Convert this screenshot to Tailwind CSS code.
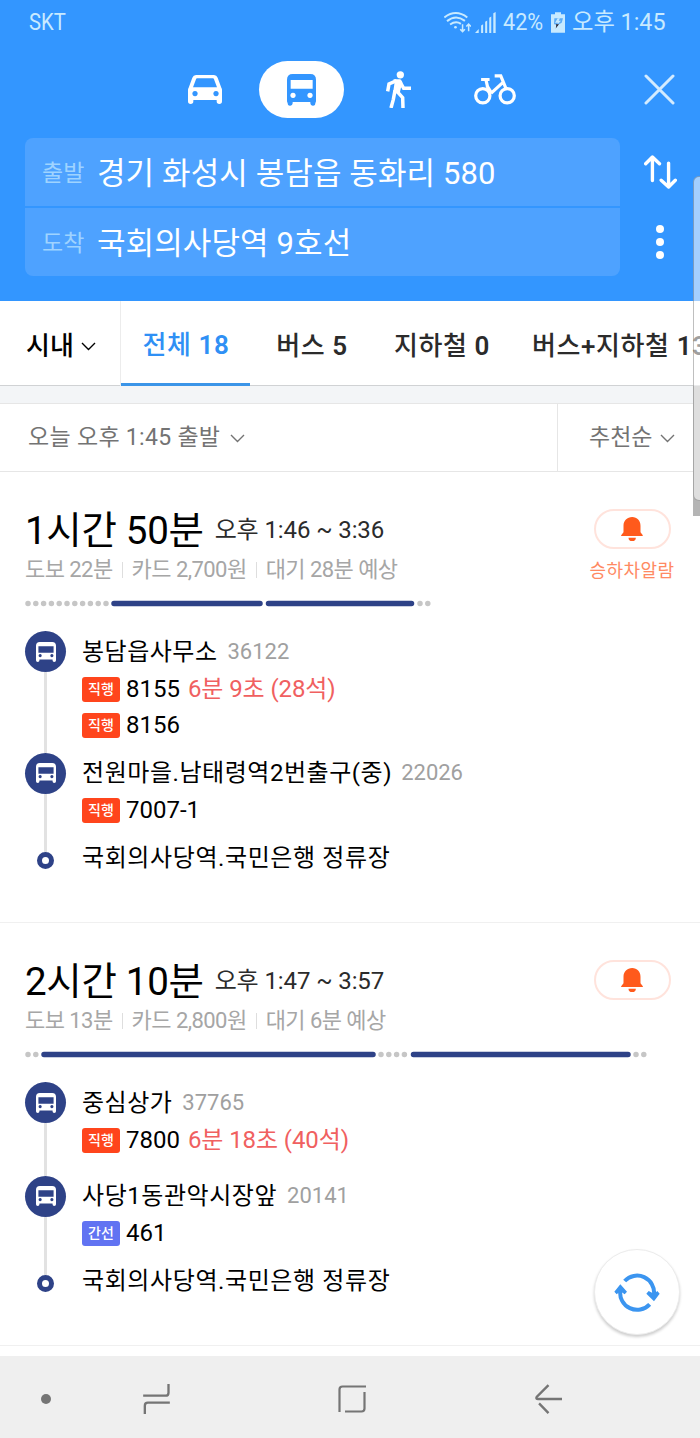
<!DOCTYPE html>
<html lang="ko">
<head>
  <meta charset="UTF-8" />
  <meta name="viewport" content="width=device-width, initial-scale=1.0"/>
  <title>길찾기</title>
  <script src="https://cdn.jsdelivr.net/npm/@tailwindcss/browser@4"></script>
  <style>
    body { font-family: Roboto, 'Noto Sans CJK KR', sans-serif; }
  </style>
</head>
<body class="bg-white">
  <svg class="hidden">
    <symbol id="bus" viewBox="0 0 58 58">
      <path fill-rule="evenodd" d="M11 0h36q11 0 11 11v42a5 5 0 0 1-10 0v-2H10v2a5 5 0 0 1-10 0V11Q0 0 11 0zM7 12v19h44V12zM12 35a4.500 4.500 0 1 0 .1 0zM46 35a4.500 4.500 0 1 0 .1 0z"/>
    </symbol>
    <symbol id="chevron" viewBox="0 0 15 9">
      <path d="M1 1l6.500 6.500L14 1" fill="none" stroke="currentColor" stroke-width="1.400"/>
    </symbol>
    <symbol id="bell" viewBox="0 0 65 72">
      <path d="M33 0c15 0 25 11 25 26v20l7 9q1 2-2 2H2q-3 0-2-2l7-9V26C7 11 18 0 33 0zM22 62h22a11 10 0 0 1-22 0z"/>
    </symbol>
  </svg>

  <div class="relative w-[700px] h-[1438px] overflow-hidden flex flex-col">
    <!-- Header -->
    <header class="h-[301px] shrink-0 bg-[#3396ff] text-white">
      <div class="h-[44px] pl-[29px] flex items-center text-[23px] leading-none text-[#c8eaff] whitespace-nowrap">
        <span class="w-[415px] origin-left scale-x-[0.88]">SKT</span>
        <svg class="w-[27px] h-[21px] shrink-0" viewBox="0 0 80 62" fill="none" stroke="currentColor" stroke-width="6">
          <path d="M1 16Q35-10 69 16M9 27Q35 6 62 26M18 37Q35 25 50 35"/>
          <circle cx="34" cy="45" r="4" fill="currentColor" stroke="none"/>
          <path stroke-width="4.500" d="M55 36v22M48 51l7 7 7-7M73 57V36M66 43l7-7 7 7"/>
        </svg>
        <svg class="ml-1 w-[21px] h-[21px] shrink-0" viewBox="0 0 62 62" fill="currentColor">
          <path d="M0 62l11-12v12zM18 62V40l6-4v26zM30 62V29l6-4v37zM42 62V17l6-4v49zM54 62V4l7-4v62z"/>
        </svg>
        <span class="ml-[7px] w-[48px] origin-left scale-x-[0.9] text-[24px]">42%</span>
        <svg class="w-[14px] h-[21px] shrink-0" viewBox="0 0 42 62">
          <path fill="currentColor" d="M12 0h18v6h12v56H0V6h12z"/>
          <path fill="#5cabf5" d="M10 18h26l-4 14-8 4H9z"/>
          <path fill="#c8eaff" d="M20 18l-8 14h9l-3 6 12-12h-7l4-8z"/>
          <path fill="#223" d="M14 36h10L14 49l2-8z"/>
        </svg>
        <span class="ml-[7px] w-[94px] origin-left scale-x-[0.97] text-[24px]">오후 1:45</span>
      </div>

      <div class="mt-[17px] h-[57px] pl-[188px] flex items-center">
        <svg class="w-[34px] h-[29px]" viewBox="0 0 102 87" fill="currentColor">
          <path fill-rule="evenodd" d="M24 0h54q8 0 11 8l11 30q2 3 2 6v35a8 8 0 0 1-16 0v-4H16v4a8 8 0 0 1-16 0V44q0-3 2-6L13 8Q16 0 24 0zM27 10q-2 0-3 3l-9 24h72l-9-24q-1-3-3-3zM21 48a8 8 0 1 0 .1 0zM84 48a8 8 0 1 0 .1 0z"/>
        </svg>
        <div class="ml-[37px] w-[85px] h-[57px] rounded-full bg-white text-[#3396ff] flex items-center justify-center">
          <svg class="w-[29px] h-[32px]" viewBox="0 0 87 96" fill="currentColor">
            <path fill-rule="evenodd" d="M17 0h53q17 0 17 17v64q0 3-2 6a7 7 0 0 1-15 1v-4H17v4a7 7 0 0 1-15-1q-2-3-2-6V17Q0 0 17 0zM11 18v26h66V18zM18 56a8 8 0 1 0 .1 0zM69 56a8 8 0 1 0 .1 0z"/>
          </svg>
        </div>
        <svg class="ml-[42px] w-[25px] h-[37px]" viewBox="0 0 75 111" fill="none" stroke="currentColor" stroke-width="10.500">
          <circle cx="43" cy="11.500" r="11" fill="currentColor" stroke="none"/>
          <path fill="currentColor" stroke="none" d="M22 25h21l6 8-8 34H21l5-34z"/>
          <path d="M32 29L9 39 5 61M40 29l13 23h22M27 58l-5 27-7 26M33 61l17 19 1 31"/>
        </svg>
        <svg class="ml-[63px] w-[42px] h-[31px]" viewBox="0 0 124 91" fill="none" stroke="currentColor" stroke-width="9.500">
          <circle cx="26" cy="64" r="21"/>
          <circle cx="98" cy="64" r="21"/>
          <path d="M21 16h25M35 16l7 30M61 5h18l16 39M84 26L50 57M38 34l14 22"/>
        </svg>
        <svg class="ml-[128px] w-[31px] h-[31px] text-[#d3ebff]" viewBox="0 0 31 31" fill="none" stroke="currentColor" stroke-width="3" stroke-linecap="round">
          <path d="M2 2l27 27M29 2L2 29"/>
        </svg>
      </div>

      <div class="mt-5 pl-[25px] flex">
        <div class="w-[595px] flex flex-col gap-[2px] text-[31px] tracking-[0.1px] whitespace-nowrap">
          <div class="h-[68px] pl-[17px] pt-1 bg-[#4ea2ff] rounded-t-lg flex items-center">
            <span class="w-[55px] text-[23px] text-[#9fd3ff]">출발</span>경기 화성시 봉담읍 동화리 580
          </div>
          <div class="h-[68px] pl-[17px] pt-1 bg-[#4ea2ff] rounded-b-lg flex items-center">
            <span class="w-[55px] text-[23px] text-[#9fd3ff]">도착</span>국회의사당역 9호선
          </div>
        </div>
        <div class="ml-6 w-[33px] flex flex-col items-center">
          <svg class="mt-[17px] w-[33px] h-[34px]" viewBox="0 0 98 101" fill="none" stroke="currentColor" stroke-width="10" stroke-linecap="round" stroke-linejoin="round">
            <path d="M25 76V7M5 26L25 6l21 20M73 24v70M51 75l22 20 20-20"/>
          </svg>
          <div class="mt-[36px] mr-px flex flex-col gap-[5px]">
            <i class="size-2 rounded-full bg-white"></i>
            <i class="size-2 rounded-full bg-white"></i>
            <i class="size-2 rounded-full bg-white"></i>
          </div>
        </div>
      </div>
    </header>

    <!-- Tabs -->
    <nav class="h-[85px] shrink-0 border-b border-[#d0d2d4] flex text-[26px] font-medium tracking-[0.6px] text-[#2b2b2b] whitespace-nowrap">
      <div class="w-[121px] shrink-0 h-[87px] pl-[26px] pt-[3px] border-r border-[#ececec] flex items-center gap-[7px] tracking-normal text-black">
        시내
        <svg class="w-[15px] h-[9px]"><use href="#chevron"/></svg>
      </div>
      <div class="w-[129px] shrink-0 h-[85px] pt-[6px] pl-px border-b-[3px] border-[#3b95e8] flex items-center justify-center text-[#2f90f5]">전체&nbsp;<b class="font-semibold">18</b></div>
      <div class="w-[124px] shrink-0 h-[87px] pt-[3px] flex items-center justify-center">버스&nbsp;<b class="font-semibold">5</b></div>
      <div class="w-[136px] shrink-0 h-[87px] pt-[3px] flex items-center justify-center">지하철&nbsp;<b class="font-semibold">0</b></div>
      <div class="h-[87px] shrink-0 pl-[22px] pt-[3px] flex items-center">버스+지하철&nbsp;<b class="font-semibold">13</b></div>
    </nav>

    <!-- Filters -->
    <div class="h-[17px] shrink-0 bg-[#f3f5f7]"></div>
    <div class="h-[69px] shrink-0 border-y border-[#e6e6e6] flex text-[23px] tracking-[0.3px] text-[#737373]">
      <div class="w-[558px] pl-[28px] pt-px border-r border-[#e6e6e6] flex items-center gap-[10px]">
        오늘 오후 1:45 출발
        <svg class="w-[15px] h-[9px]"><use href="#chevron"/></svg>
      </div>
      <div class="pl-[31px] pt-[2px] flex items-center gap-[8px] tracking-normal">
        추천순
        <svg class="w-[15px] h-[9px]"><use href="#chevron"/></svg>
      </div>
    </div>

    <!-- Route 1 -->
    <section class="h-[451px] shrink-0 border-b border-[#f0f0f0] px-[25px] pt-[36px] leading-none whitespace-nowrap">
      <div class="flex justify-between">
        <div>
          <div class="h-[44px] pt-px flex items-center gap-[11px]">
            <h2 class="pt-px text-[38.5px] tracking-[-0.3px] text-black">1시간 50분</h2>
            <span class="pb-[2px] text-[24px] tracking-[-0.1px] text-[#2b2b2b]">오후 1:46 ~ 3:36</span>
          </div>
          <div class="h-[34px] pt-px flex items-center gap-[9px] text-[22px] tracking-[-0.55px] text-[#a6a6a6]">
            <span>도보 22분</span><i class="w-px h-4 bg-[#dedede]"></i><span>카드 2,700원</span><i class="w-px h-4 bg-[#dedede]"></i><span>대기 28분 예상</span>
          </div>
        </div>
        <div class="w-[86px] flex flex-col items-center text-[#ff8a63]">
          <button class="mt-px w-[77px] h-[40px] pr-px rounded-full border-2 border-[#ffe3dc] flex items-center justify-center">
            <svg class="w-[22px] h-[24px] fill-[#ff5a1c]"><use href="#bell"/></svg>
          </button>
          <span class="mt-[13px] text-[18px] tracking-[0.4px]">승하차알람</span>
        </div>
      </div>
      <svg class="mt-[14px] w-[650px] h-[7px]" viewBox="25 0 650 7" fill="none" stroke-linecap="round" stroke-width="5.500">
        <path stroke="#2e4287" d="M114 3.500H260M268.500 3.500H411.500"/>
        <path stroke="#c6c6c6" stroke-dasharray="0 7.800" d="M28 3.500H106.500M420 3.500H428.500"/>
      </svg>

      <div class="mt-[24px] text-[24px] text-black">
        <div class="flex h-[122px]">
          <div class="w-[41px] mr-4 flex flex-col items-center">
            <div class="size-[41px] shrink-0 rounded-full bg-[#2e4287] flex items-center justify-center">
              <svg class="size-[20px] fill-white"><use href="#bus"/></svg>
            </div>
            <i class="w-[3px] grow bg-[#e2e2e2]"></i>
          </div>
          <div>
            <div class="h-[40px] pt-px flex items-center gap-[10px] tracking-[0.5px]">봉담읍사무소<span class="text-[22px] tracking-normal text-[#a0a0a0]">36122</span></div>
            <div class="h-[36px] flex items-center"><b class="w-[38px] h-[25px] mr-[6px] rounded-[3px] bg-[#ff451c] text-white text-[14px] font-medium flex items-center justify-center">직행</b>8155<span class="ml-2 tracking-[-0.1px] text-[#f06060]">6분 9초 (28석)</span></div>
            <div class="h-[36px] flex items-center"><b class="w-[38px] h-[25px] mr-[6px] rounded-[3px] bg-[#ff451c] text-white text-[14px] font-medium flex items-center justify-center">직행</b>8156</div>
          </div>
        </div>
        <div class="flex h-[99px]">
          <div class="w-[41px] mr-4 flex flex-col items-center">
            <div class="size-[41px] shrink-0 rounded-full bg-[#2e4287] flex items-center justify-center">
              <svg class="mb-px size-[20px] fill-white"><use href="#bus"/></svg>
            </div>
            <i class="w-[3px] grow bg-[#e2e2e2]"></i>
          </div>
          <div>
            <div class="h-[39px] pt-px flex items-center gap-[9px] tracking-[0.55px]">전원마을.남태령역2번출구(중)<span class="text-[22px] tracking-normal text-[#a0a0a0]">22026</span></div>
            <div class="h-[36px] flex items-center"><b class="w-[38px] h-[25px] mr-[6px] rounded-[3px] bg-[#ff451c] text-white text-[14px] font-medium flex items-center justify-center">직행</b>7007-1</div>
          </div>
        </div>
        <div class="flex h-[14px] items-center">
          <div class="w-[41px] mr-4 flex justify-center">
            <i class="mt-[3px] size-[17px] rounded-full border-[5.500px] border-[#2e4287]"></i>
          </div>
          <span class="pb-[2px] tracking-[0.6px]">국회의사당역.국민은행 정류장</span>
        </div>
      </div>
    </section>

    <!-- Route 2 -->
    <section class="h-[423px] shrink-0 border-b border-[#f0f0f0] px-[25px] pt-[36px] leading-none whitespace-nowrap">
      <div class="flex justify-between">
        <div>
          <div class="h-[44px] pt-px flex items-center gap-[11px]">
            <h2 class="pt-px text-[38.5px] tracking-[-0.3px] text-black">2시간 10분</h2>
            <span class="pb-[2px] text-[24px] tracking-[-0.1px] text-[#2b2b2b]">오후 1:47 ~ 3:57</span>
          </div>
          <div class="h-[34px] pt-px flex items-center gap-[9px] text-[22px] tracking-[-0.55px] text-[#a6a6a6]">
            <span>도보 13분</span><i class="w-px h-4 bg-[#dedede]"></i><span>카드 2,800원</span><i class="w-px h-4 bg-[#dedede]"></i><span>대기 6분 예상</span>
          </div>
        </div>
        <div class="w-[86px] flex flex-col items-center">
          <button class="mt-px w-[77px] h-[40px] pr-px rounded-full border-2 border-[#ffe3dc] flex items-center justify-center">
            <svg class="w-[22px] h-[24px] fill-[#ff5a1c]"><use href="#bell"/></svg>
          </button>
        </div>
      </div>
      <svg class="mt-[14px] w-[650px] h-[7px]" viewBox="25 0 650 7" fill="none" stroke-linecap="round" stroke-width="5.500">
        <path stroke="#2e4287" d="M44 3.500H373M413.500 3.500H628"/>
        <path stroke="#c6c6c6" stroke-dasharray="0 7.800" d="M28 3.500H36.500M381 3.500H405M636 3.500H644.500"/>
      </svg>

      <div class="mt-[24px] text-[24px] text-black">
        <div class="flex h-[94px]">
          <div class="w-[41px] mr-4 flex flex-col items-center">
            <div class="size-[41px] shrink-0 rounded-full bg-[#2e4287] flex items-center justify-center">
              <svg class="size-[20px] fill-white"><use href="#bus"/></svg>
            </div>
            <i class="w-[3px] grow bg-[#e2e2e2]"></i>
          </div>
          <div>
            <div class="h-[40px] pt-px flex items-center gap-[10px] tracking-[0.5px]">중심상가<span class="text-[22px] tracking-normal text-[#a0a0a0]">37765</span></div>
            <div class="h-[36px] flex items-center"><b class="w-[38px] h-[25px] mr-[6px] rounded-[3px] bg-[#ff451c] text-white text-[14px] font-medium flex items-center justify-center">직행</b>7800<span class="ml-2 tracking-[-0.1px] text-[#f06060]">6분 18초 (40석)</span></div>
          </div>
        </div>
        <div class="flex h-[99px]">
          <div class="w-[41px] mr-4 flex flex-col items-center">
            <div class="size-[41px] shrink-0 rounded-full bg-[#2e4287] flex items-center justify-center">
              <svg class="mb-px size-[20px] fill-white"><use href="#bus"/></svg>
            </div>
            <i class="w-[3px] grow bg-[#e2e2e2]"></i>
          </div>
          <div>
            <div class="h-[39px] pt-px flex items-center gap-[10px] tracking-[0.55px]">사당1동관악시장앞<span class="text-[22px] tracking-normal text-[#a0a0a0]">20141</span></div>
            <div class="h-[36px] flex items-center"><b class="w-[38px] h-[25px] mr-[6px] rounded-[3px] bg-[#6173f2] text-white text-[14px] font-medium flex items-center justify-center">간선</b>461</div>
          </div>
        </div>
        <div class="flex h-[14px] items-center">
          <div class="w-[41px] mr-4 flex justify-center">
            <i class="mt-[3px] size-[17px] rounded-full border-[5.500px] border-[#2e4287]"></i>
          </div>
          <span class="pb-[2px] tracking-[0.6px]">국회의사당역.국민은행 정류장</span>
        </div>
      </div>
    </section>

    <!-- System navigation -->
    <footer class="mt-auto h-[82px] shrink-0 bg-[#efefef] pl-[41px] pt-[3px] flex items-center text-[#757575]">
      <i class="size-[10px] rounded-full bg-[#757575]"></i>
      <svg class="ml-[92px] w-[27px] h-[30px]" viewBox="0 0 80 90" fill="none" stroke="currentColor" stroke-width="7">
        <path d="M0 35h67q9 0 9-9V0M80 56H14q-9 0-9 9v25"/>
      </svg>
      <svg class="ml-[168px] w-[28px] h-[28px]" viewBox="0 0 28 28" fill="none" stroke="currentColor" stroke-width="2.200">
        <path d="M1.500 27V4.500q0-3 3-3H28M26.500 7v16.500q0 3-3 3H7"/>
      </svg>
      <svg class="ml-[169px] w-[27px] h-[30px]" viewBox="0 0 80 88" fill="none" stroke="currentColor" stroke-width="7">
        <path d="M80 44H9q-7 0-4-6L40 3M12 57l28 29"/>
      </svg>
    </footer>

    <!-- Refresh button -->
    <button class="absolute left-[594px] top-[1249px] size-[86px] rounded-full bg-white border border-[#ececec] shadow-[0_2px_3px_rgba(0,0,0,0.2)] flex items-center justify-center text-[#3b95f0]">
      <svg class="w-[46px] h-[39px]" viewBox="0 0 136 117" fill="none" stroke="currentColor" stroke-width="12">
        <path d="M31 24A51 51 0 0 1 119 64M106 94A51 51 0 0 1 18 52"/>
        <path fill="currentColor" stroke="none" d="M96 62l7-8 16 8 10-8 7 8-17 23zM0 56l18-22 20 22-7 8-13-9-11 9z"/>
      </svg>
    </button>

    <!-- Edge panel handle -->
    <div class="absolute left-[693px] top-[386px] w-[7px] h-[130px] bg-[#b5b5b5]"></div>
    <div class="absolute left-[693px] top-[176px] w-[14px] h-[325px] rounded-l-[6px] border border-black/25 bg-white/55"></div>
  </div>
</body>
</html>
